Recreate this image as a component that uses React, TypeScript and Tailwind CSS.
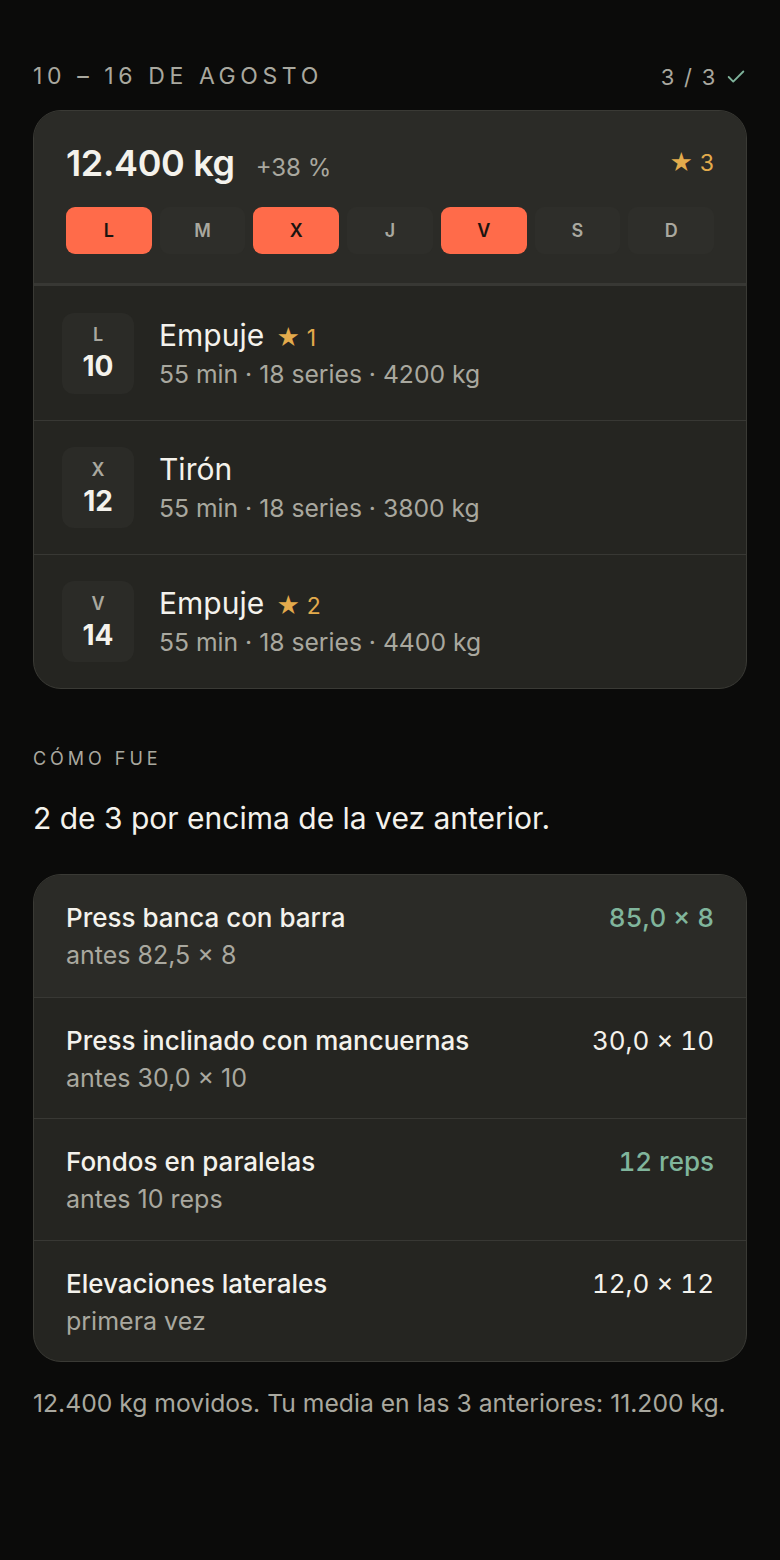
import { Check } from "lucide-react";

const days = [
  { d: "L", on: true },
  { d: "M", on: false },
  { d: "X", on: true },
  { d: "J", on: false },
  { d: "V", on: true },
  { d: "S", on: false },
  { d: "D", on: false },
];

const sessions = [
  { day: "L", num: "10", name: "Empuje", stars: 1, kg: "4200 kg" },
  { day: "X", num: "12", name: "Tirón", stars: 0, kg: "3800 kg" },
  { day: "V", num: "14", name: "Empuje", stars: 2, kg: "4400 kg" },
];

const lifts = [
  { name: "Press banca con barra", before: "antes 82,5 × 8", now: "85,0 × 8", up: true },
  { name: "Press inclinado con mancuernas", before: "antes 30,0 × 10", now: "30,0 × 10", up: false },
  { name: "Fondos en paralelas", before: "antes 10 reps", now: "12 reps", up: true },
  { name: "Elevaciones laterales", before: "primera vez", now: "12,0 × 12", up: false },
];

function WeekCard() {
  return (
    <div className="rounded-[28px] border border-[#3a3a35] bg-[#252521] overflow-hidden">
      <div className="bg-[#2b2b27] px-8 pt-[34px] pb-[29px] border-b-[3px] border-[#383834]">
        <div className="flex items-center justify-between">
          <div className="flex items-baseline gap-[21px]">
            <span className="text-[36px] font-semibold text-[#f4f2ec] leading-none tracking-[-0.01em]">
              12.400 kg
            </span>
            <span className="text-[24px] text-[#a9a89f] leading-none">+38 %</span>
          </div>
          <span className="text-[23px] text-[#e3ab4c] leading-none">★ 3</span>
        </div>
        <div className="mt-[26px] grid grid-cols-7 gap-2">
          {days.map((x) =>
            x.on ? (
              <div
                key={x.d}
                className="h-[47px] rounded-[9px] bg-[#ff6b4a] flex items-center justify-center text-[18px] font-semibold text-[#1a1410]"
              >
                {x.d}
              </div>
            ) : (
              <div
                key={x.d}
                className="h-[47px] rounded-[9px] bg-[#2e2e2a] flex items-center justify-center text-[18px] font-semibold text-[#a9a89f]"
              >
                {x.d}
              </div>
            )
          )}
        </div>
      </div>
      {sessions.map((s, i) => (
        <div
          key={s.num}
          className={
            "h-[134px] flex items-center gap-[25px] px-7 " +
            (i > 0 ? "border-t border-[#383834]" : "")
          }
        >
          <div className="w-[72px] h-[81px] rounded-[12px] bg-[#2b2b27] flex flex-col items-center justify-center">
            <span className="text-[18px] font-semibold text-[#a9a89f] leading-none">{s.day}</span>
            <span className="mt-[8px] text-[28px] font-bold text-[#f4f2ec] leading-none">{s.num}</span>
          </div>
          <div className="flex flex-col">
            <div className="flex items-baseline gap-3">
              <span className="text-[30px] text-[#f4f2ec] leading-none">{s.name}</span>
              {s.stars > 0 && (
                <span className="text-[23px] text-[#e3ab4c] leading-none">★ {s.stars}</span>
              )}
            </div>
            <span className="mt-[12px] text-[24.7px] text-[#a9a89f] leading-none">
              55 min · 18 series · {s.kg}
            </span>
          </div>
        </div>
      ))}
    </div>
  );
}

function LiftsCard() {
  return (
    <div className="rounded-[28px] border border-[#3a3a35] bg-[#252521] overflow-hidden">
      {lifts.map((l, i) => (
        <div
          key={l.name}
          className={
            "h-[121.5px] px-8 pt-[30px] flex justify-between " +
            (i > 0 ? "border-t border-[#383834] " : "") +
            (i === 0 ? "bg-[#2b2b27]" : "")
          }
        >
          <div className="flex flex-col">
            <span className="text-[26px] font-medium text-[#f4f2ec] leading-none">{l.name}</span>
            <span className="mt-[12px] text-[25px] text-[#a9a89f] leading-none">{l.before}</span>
          </div>
          <span
            className={
              "text-[26px] leading-none tabular-nums " +
              (l.up ? "font-medium text-[#80b59c]" : "text-[#f4f2ec]")
            }
          >
            {l.now}
          </span>
        </div>
      ))}
    </div>
  );
}

export default function App() {
  return (
    <div
      className="min-h-[1560px] bg-[#0b0b0a] px-[33px] pt-[65px]"
      style={{ fontFamily: "Inter, 'Noto Sans', sans-serif" }}
    >
      <div className="flex items-center justify-between text-[#a9a89f]">
        <span className="text-[23px] tracking-[0.2em] leading-none">10 – 16 DE AGOSTO</span>
        <span className="flex items-center gap-2 text-[22px] tracking-[0.08em] leading-none">
          3 / 3
          <Check className="w-[22px] h-[22px] text-[#7fb39b]" strokeWidth={2} />
        </span>
      </div>
      <div className="mt-[22px]">
        <WeekCard />
      </div>
      <div className="mt-[61px] text-[18px] text-[#a9a89f] tracking-[0.22em] leading-none">CÓMO FUE</div>
      <div className="mt-[35px] text-[30px] text-[#f4f2ec] leading-none">
        2 de 3 por encima de la vez anterior.
      </div>
      <div className="mt-[41px]">
        <LiftsCard />
      </div>
      <div className="mt-[29px] text-[24.7px] text-[#a9a89f] leading-none">
        12.400 kg movidos. Tu media en las 3 anteriores: 11.200 kg.
      </div>
    </div>
  );
}
